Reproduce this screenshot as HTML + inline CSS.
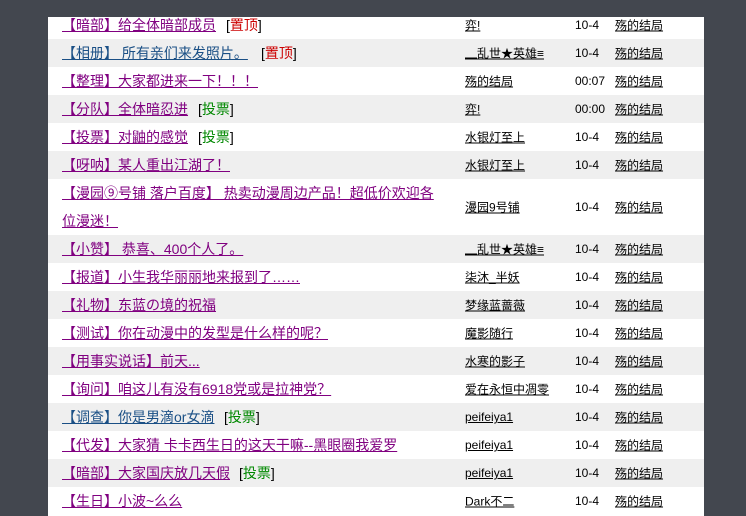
<!DOCTYPE html>
<html><head><meta charset="utf-8"><style>
body{margin:0;background:#43474f;width:746px;height:516px;overflow:hidden;font-family:"Liberation Sans","Noto Sans CJK SC",sans-serif;font-size:14px}
#p{position:absolute;left:48px;top:17px;width:656px;height:499px;background:#fff}
.r{position:absolute;left:48px;width:656px;height:28px}
.g{background:#efefef}
.r>span{position:absolute;top:50%;transform:translateY(-50%);white-space:nowrap}
.t{left:14px;color:#800080;text-decoration:underline}
.b{color:#1a4f85}
.a{left:417px;text-decoration:underline;color:#000;font-size:12px}
.d{left:527px;color:#000;font-size:12px}
.l{left:567px;text-decoration:underline;color:#000;font-size:12px}
.red{color:#c00}.grn{color:#080}
.x{color:#000}
</style></head><body><div id="p"></div>
<div class="r" style="top:14px;height:22px"><span class="t">【暗部】给全体暗部成员</span><span class="x" style="left:178px">[<span class="red">置顶</span>]</span><span class="a">弈!</span><span class="d">10-4</span><span class="l">殇的结局</span></div>
<div class="r g" style="top:39px"><span class="t b">【相册】 所有亲们来发照片。</span><span class="x" style="left:213px">[<span class="red">置顶</span>]</span><span class="a">▁乱世★英雄≡</span><span class="d">10-4</span><span class="l">殇的结局</span></div>
<div class="r" style="top:67px"><span class="t">【整理】大家都进来一下！！！</span><span class="a">殇的结局</span><span class="d">00:07</span><span class="l">殇的结局</span></div>
<div class="r g" style="top:95px"><span class="t">【分队】全体暗忍进</span><span class="x" style="left:150px">[<span class="grn">投票</span>]</span><span class="a">弈!</span><span class="d">00:00</span><span class="l">殇的结局</span></div>
<div class="r" style="top:123px"><span class="t">【投票】对鼬的感觉</span><span class="x" style="left:150px">[<span class="grn">投票</span>]</span><span class="a">水银灯至上</span><span class="d">10-4</span><span class="l">殇的结局</span></div>
<div class="r g" style="top:151px"><span class="t">【呀呐】某人重出江湖了！</span><span class="a">水银灯至上</span><span class="d">10-4</span><span class="l">殇的结局</span></div>
<div class="r" style="top:179px;height:56px"><span class="t" style="white-space:normal;width:382px;line-height:28px">【漫园⑨号铺 落户百度】 热卖动漫周边产品！超低价欢迎各位漫迷！</span><span class="a">漫园9号铺</span><span class="d">10-4</span><span class="l">殇的结局</span></div>
<div class="r g" style="top:235px"><span class="t">【小赞】 恭喜、400个人了。</span><span class="a">▁乱世★英雄≡</span><span class="d">10-4</span><span class="l">殇的结局</span></div>
<div class="r" style="top:263px"><span class="t">【报道】小生我华丽丽地来报到了……</span><span class="a">柒沐_半妖</span><span class="d">10-4</span><span class="l">殇的结局</span></div>
<div class="r g" style="top:291px"><span class="t">【礼物】东蓝の境的祝福</span><span class="a">梦缘蓝蔷薇</span><span class="d">10-4</span><span class="l">殇的结局</span></div>
<div class="r" style="top:319px"><span class="t">【测试】你在动漫中的发型是什么样的呢？</span><span class="a">魔影随行</span><span class="d">10-4</span><span class="l">殇的结局</span></div>
<div class="r g" style="top:347px"><span class="t">【用事实说话】前天...</span><span class="a">水寒的影子</span><span class="d">10-4</span><span class="l">殇的结局</span></div>
<div class="r" style="top:375px"><span class="t">【询问】咱这儿有没有6918党或是拉神党？</span><span class="a">爱在永恒中凋零</span><span class="d">10-4</span><span class="l">殇的结局</span></div>
<div class="r g" style="top:403px"><span class="t b">【调查】你是男滴or女滴</span><span class="x" style="left:176px">[<span class="grn">投票</span>]</span><span class="a">peifeiya1</span><span class="d">10-4</span><span class="l">殇的结局</span></div>
<div class="r" style="top:431px"><span class="t">【代发】大家猜 卡卡西生日的这天干嘛--黑眼圈我爱罗</span><span class="a">peifeiya1</span><span class="d">10-4</span><span class="l">殇的结局</span></div>
<div class="r g" style="top:459px"><span class="t">【暗部】大家国庆放几天假</span><span class="x" style="left:191px">[<span class="grn">投票</span>]</span><span class="a">peifeiya1</span><span class="d">10-4</span><span class="l">殇的结局</span></div>
<div class="r" style="top:487px"><span class="t">【生日】小波~么么</span><span class="a">Dark不二</span><span class="d">10-4</span><span class="l">殇的结局</span></div>
</body></html>
